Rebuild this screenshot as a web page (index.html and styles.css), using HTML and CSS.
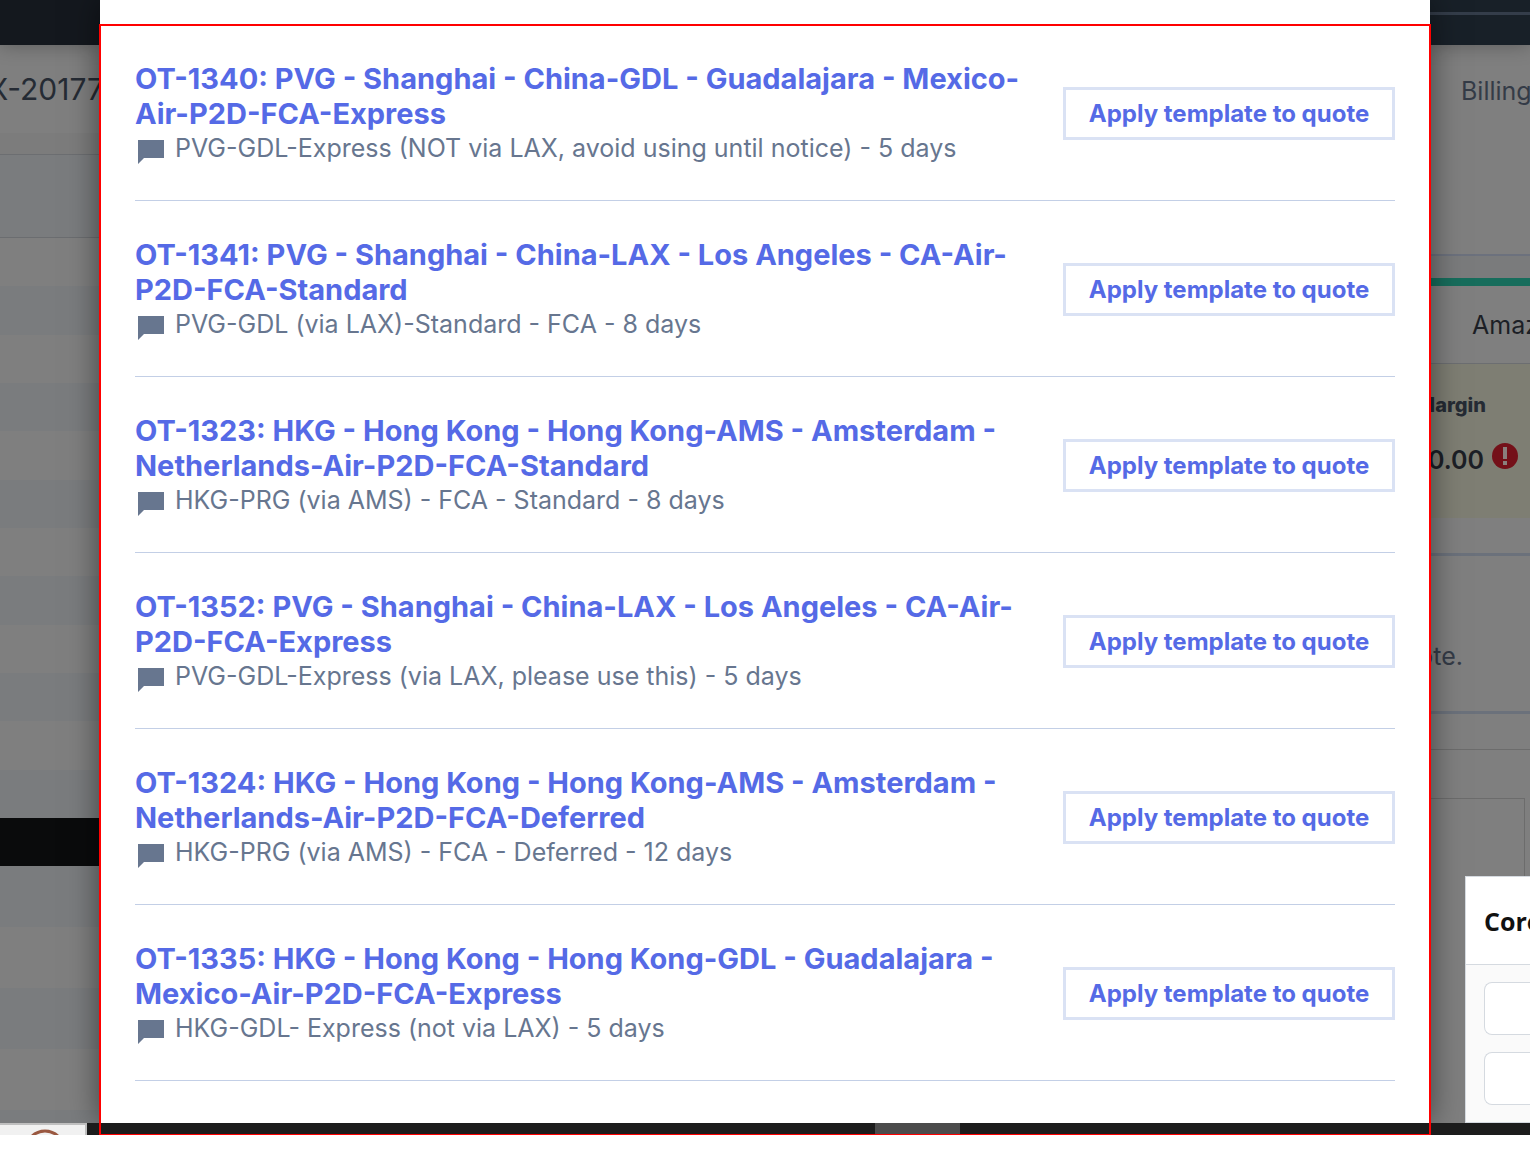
FILE: index.html
```html
<!DOCTYPE html>
<html lang="en">
<head>
<meta charset="utf-8">
<title>Apply quote template</title>
<link rel="stylesheet" href="styles.css">
</head>
<body>
<div class="screen">
  <div class="workspace">
    <div class="page-left">
      <div class="topbar"></div>
      <div class="quote-id">FLEX-20177</div>
      <div class="strip"></div>
      <div class="table-head"></div>
      <div class="line"></div><div class="line"></div><div class="line"></div><div class="line"></div>
      <div class="line"></div><div class="line"></div><div class="line"></div><div class="line"></div>
      <div class="line"></div><div class="line"></div><div class="line"></div><div class="line"></div>
      <div class="total"></div>
      <div class="line tall alt"></div><div class="line tall"></div><div class="line tall alt"></div><div class="line tall"></div>
      <div class="line rest alt"></div>
    </div>

    <main class="modal" role="dialog" aria-label="Quote templates">
      <ul class="templates">
        <li class="template">
          <div class="info">
            <a class="name" href="#">OT-1340: PVG - Shanghai - China-GDL - Guadalajara - Mexico-<wbr>Air-P2D-FCA-Express</a>
            <p class="note"><svg class="bubble" viewBox="0 0 26 24"><path d="M0 0H26V18H6L0 24Z"/></svg>PVG-GDL-Express (NOT via LAX, avoid using until notice) - 5 days</p>
          </div>
          <button class="apply" type="button">Apply template to quote</button>
        </li>
        <li class="template">
          <div class="info">
            <a class="name" href="#">OT-1341: PVG - Shanghai - China-LAX - Los Angeles - CA-Air-<wbr>P2D-FCA-Standard</a>
            <p class="note"><svg class="bubble" viewBox="0 0 26 24"><path d="M0 0H26V18H6L0 24Z"/></svg>PVG-GDL (via LAX)-Standard - FCA - 8 days</p>
          </div>
          <button class="apply" type="button">Apply template to quote</button>
        </li>
        <li class="template">
          <div class="info">
            <a class="name" href="#">OT-1323: HKG - Hong Kong - Hong Kong-AMS - Amsterdam - Netherlands-Air-P2D-FCA-Standard</a>
            <p class="note"><svg class="bubble" viewBox="0 0 26 24"><path d="M0 0H26V18H6L0 24Z"/></svg>HKG-PRG (via AMS) - FCA - Standard - 8 days</p>
          </div>
          <button class="apply" type="button">Apply template to quote</button>
        </li>
        <li class="template">
          <div class="info">
            <a class="name" href="#">OT-1352: PVG - Shanghai - China-LAX - Los Angeles - CA-Air-<wbr>P2D-FCA-Express</a>
            <p class="note"><svg class="bubble" viewBox="0 0 26 24"><path d="M0 0H26V18H6L0 24Z"/></svg>PVG-GDL-Express (via LAX, please use this) - 5 days</p>
          </div>
          <button class="apply" type="button">Apply template to quote</button>
        </li>
        <li class="template">
          <div class="info">
            <a class="name" href="#">OT-1324: HKG - Hong Kong - Hong Kong-AMS - Amsterdam - Netherlands-Air-P2D-FCA-Deferred</a>
            <p class="note"><svg class="bubble" viewBox="0 0 26 24"><path d="M0 0H26V18H6L0 24Z"/></svg>HKG-PRG (via AMS) - FCA - Deferred - 12 days</p>
          </div>
          <button class="apply" type="button">Apply template to quote</button>
        </li>
        <li class="template">
          <div class="info">
            <a class="name" href="#">OT-1335: HKG - Hong Kong - Hong Kong-GDL - Guadalajara - Mexico-Air-P2D-FCA-Express</a>
            <p class="note"><svg class="bubble" viewBox="0 0 26 24"><path d="M0 0H26V18H6L0 24Z"/></svg>HKG-GDL- Express (not via LAX) - 5 days</p>
          </div>
          <button class="apply" type="button">Apply template to quote</button>
        </li>
      </ul>
    </main>

    <div class="page-right">
      <div class="topbar"><div class="topbar-rule"></div></div>
      <div class="billing">Billing</div>
      <div class="gap"></div>
      <div class="vendor">Amazon</div>
      <div class="margin-card">
        <div class="margin-label">Margin</div>
        <div class="margin-value">$0.00
          <svg class="alert" viewBox="0 0 26 26"><circle cx="13" cy="13" r="13" fill="#741019"/><path d="M11 4H15V16H11ZM11 18H15V22H11Z" fill="#8a7f7d"/></svg>
        </div>
      </div>
      <div class="blank"></div>
      <div class="hint">this quote.</div>
      <div class="blank tail"></div>
      <div class="panel"><div class="box"></div></div>
    </div>

    <aside class="chat">
      <div class="chat-title">Core</div>
      <div class="chat-body">
        <input class="field" type="text" aria-label="First field">
        <input class="field" type="text" aria-label="Second field">
      </div>
    </aside>
  </div>

  <div class="taskbar">
    <div class="search"><svg class="ring" viewBox="0 0 36 10"><circle cx="18" cy="21" r="19" fill="none" stroke="#9a5840" stroke-width="3"/></svg></div>
    <div class="task"></div>
  </div>
  <div class="frame"></div>
</div>
</body>
</html>
```
FILE: styles.css
```css
* { box-sizing: border-box; }
body {
  margin: 0;
  background: #fff;
  font-family: Inter, "Liberation Sans", sans-serif;
  font-size: 25px;
  line-height: 35px;
}
.screen { position: relative; overflow: hidden; }
.workspace {
  position: relative;
  display: grid;
  grid-template-columns: 100px 1fr 100px;
  overflow: hidden;
  background: #7f7f7f;
}

.page-left, .page-right {
  display: flex;
  flex-direction: column;
  min-width: 0;
  overflow: hidden;
  white-space: nowrap;
}
.topbar {
  height: 45px;
  flex: none;
  background: #14181e;
  box-shadow: 0 0 20px rgba(0, 0, 0, .3);
}
.page-right .topbar { padding-top: 12px; background: #182028; }
.topbar-rule { height: 3px; background: #343d4a; }

.quote-id {
  display: flex;
  justify-content: flex-end;
  align-items: center;
  height: 88px;
  margin-right: -4px;
  color: #252b34;
  font-size: 30px;
}
.strip { height: 22px; background: #7c7c7c; border-bottom: 1px solid #6c6e71; }
.table-head { height: 83px; background: #7a7c7e; border-bottom: 1px solid #6b6d70; }
.line { height: 48px; flex: 1 0 auto; }
.line:nth-child(even), .line.alt { background: #7a7c7e; }
.line:nth-child(odd):not(.alt), .line.tall:not(.alt) { background: #7f7f7f; }
.total { height: 48px; background: #0a0b0c; }
.line.tall { height: 61px; flex: none; }
.line.rest { height: 13px; flex: none; }

.modal {
  position: relative;
  z-index: 1;
  min-width: 0;
  padding: 25px 35px 42px;
  background: #fff;
  box-shadow: 0 0 30px rgba(0, 0, 0, .5);
}
.templates { margin: 0; padding: 0; list-style: none; }
.template {
  display: flex;
  align-items: center;
  justify-content: space-between;
  gap: 32px;
  padding: 36px 0 34px;
  border-bottom: 1px solid #c3cfe6;
}
.info { min-width: 0; }
.name {
  display: block;
  color: #556ae6;
  font-size: 29px;
  font-weight: 700;
  text-decoration: none;
}
.note {
  display: flex;
  align-items: center;
  gap: 11px;
  margin: 0;
  padding-left: 3px;
  color: #67768f;
}
.bubble { width: 26px; height: 24px; flex: none; margin-top: 6px; fill: #67768f; }
.apply {
  flex: none;
  width: 332px;
  padding: 6px 0;
  border: 3px solid #dae2f4;
  background: #fff;
  color: #556ae6;
  font: 700 24px/35px Inter, "Liberation Sans", sans-serif;
}

.billing {
  height: 211px;
  padding: 29px 0 0 31px;
  border-bottom: 2px solid #6c717d;
  color: #343b47;
}
.gap { height: 22px; background: #7a7b7c; }
.vendor {
  height: 86px;
  padding: 22px 0 0 42px;
  border-top: 8px solid #176d5c;
  border-bottom: 1px solid #6c6e71;
  color: #1c1f26;
}
.margin-card { height: 154px; padding-top: 24px; background: #7e7e73; }
.margin-label, .margin-value, .hint { display: flex; justify-content: flex-end; }
.margin-label { padding-right: 44px; color: #252b34; font-size: 20px; font-weight: 800; }
.margin-value { gap: 8px; padding: 20px 12px 0 0; color: #1c1f26; font-weight: 600; }
.alert { width: 26px; height: 26px; flex: none; }
.blank { height: 38px; border-bottom: 3px solid #6b717b; }
.hint { height: 158px; padding: 83px 67px 0 0; border-bottom: 3px solid #6b717b; color: #343b47; }
.blank.tail { height: 36px; border-bottom: 1px solid #6c6c6c; }
.panel { display: flex; flex: 1; padding: 48px 5px 0 0; }
.box { flex: 1; border: 1px solid #6c6c6c; border-width: 1px 1px 0 0; }

.chat {
  position: absolute;
  z-index: 2;
  right: 0;
  bottom: 0;
  width: 65px;
  overflow: hidden;
  border: 1px solid #d5dae0;
  border-right: 0;
  background: #fafafa;
  font-family: "Open Sans", "Noto Sans", sans-serif;
}
.chat-title {
  padding: 27px 0 25px 18px;
  border-bottom: 1px solid #d5dae0;
  background: #fff;
  color: #111;
  font-size: 25px;
  font-weight: 700;
}
.chat-body { display: grid; gap: 17px; padding: 17px 0 17px 18px; }
.field {
  width: 100%;
  height: 53px;
  border: 1px solid #d5dae0;
  border-right: 0;
  border-radius: 8px 0 0 8px;
  background: #fff;
}

.taskbar { display: flex; height: 12px; background: #1c1c1c; }
.search {
  width: 87px;
  overflow: hidden;
  border: solid #bfbfbf;
  border-width: 2px 2px 0 0;
  background: #f1f1f1;
}
.ring { display: block; width: 36px; height: 10px; margin: 4px auto 0 27px; }
.task { width: 85px; margin: 0 570px 0 auto; background: #4b4b4b; }

.frame {
  position: absolute;
  z-index: 3;
  inset: 24px 99px 0;
  border: 2px solid #f00;
  border-bottom-width: 1px;
  pointer-events: none;
}
```
